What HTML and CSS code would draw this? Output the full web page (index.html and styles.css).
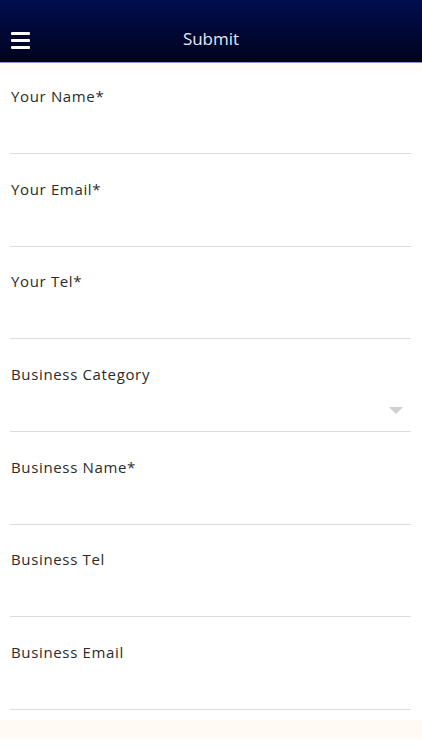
FILE: index.html
```html
<!DOCTYPE html>
<html lang="en">
<head>
  <meta charset="UTF-8">
  <meta name="viewport" content="width=device-width, initial-scale=1.0">
  <title>Submit</title>

  <link rel="stylesheet" href="styles.css">
</head>
<body>
  <div id="header">
    <span id="menu">
      <i></i><i></i><i></i>
    </span>
    <h1>Submit</h1>
  </div>
  <div class="strip"></div>

  <form id="form">
    <label class="field">
      <span>Your Name*</span>
      <input type="text">
    </label>
    <label class="field">
      <span>Your Email*</span>
      <input type="email">
    </label>
    <label class="field">
      <span>Your Tel*</span>
      <input type="tel">
    </label>
    <label class="field select">
      <span>Business Category</span>
      <input type="text">
    </label>
    <label class="field">
      <span>Business Name*</span>
      <input type="text">
    </label>
    <label class="field">
      <span>Business Tel</span>
      <input type="tel">
    </label>
    <label class="field">
      <span>Business Email</span>
      <input type="email">
    </label>
  </form>

  <div class="strip bottom"></div>
</body>
</html>
```

FILE: styles.css
```css
*{
  margin: 0;
  padding: 0;
  box-sizing: border-box;
}

body{
  background: #fff;
  font-family: "Open Sans", "Noto Sans", sans-serif;
}

#header{
  height: 63px;
  display: flex;
  align-items: center;
  justify-content: center;
  padding-top: 15px;
  background: linear-gradient(#010d4e, #00031e);
  border-bottom: 1px solid #8a8fd2;
  position: relative;
}

#header h1{
  font-size: 17px;
  font-weight: normal;
  color: #e6e8f5;
}

#menu{
  display: flex;
  flex-direction: column;
  gap: 4px;
  width: 19px;
  position: absolute;
  left: 11px;
  top: 32px;
}

#menu i{
  display: block;
  height: 3px;
  background: #fff;
  border-radius: 1px;
}

.strip{
  height: 8px;
  background: #fffaf4;
}

#form{
  display: flex;
  flex-direction: column;
  gap: 25.7px;
  padding: 16px 11px 0 10px;
}

.field{
  display: flex;
  flex-direction: column;
  position: relative;
}

.field span{
  padding-left: 1px;
  font-size: 15px;
  line-height: 18px;
  letter-spacing: 0.65px;
  color: #2b2b2b;
}

.field input{
  height: 49px;
  border: none;
  border-bottom: 1px solid #dcdcdc;
  outline: none;
  background: transparent;
}

.select::after{
  content: '';
  position: absolute;
  right: 8px;
  top: 42px;
  border-left: 7px solid transparent;
  border-right: 7px solid transparent;
  border-top: 7px solid #d0d0d0;
}

.strip.bottom{
  height: 19px;
  margin-top: 10px;
}
```
